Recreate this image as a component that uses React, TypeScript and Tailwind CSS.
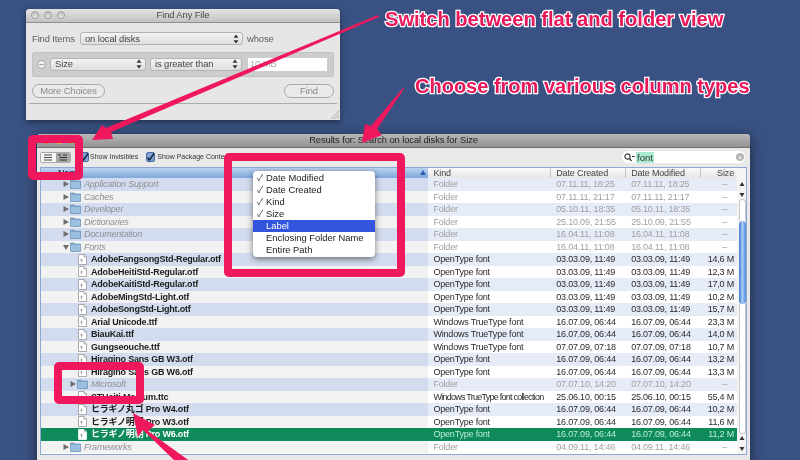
import React from "react";

type Row = { name: string; kind: string; created: string; modified: string; size: string; folder?: boolean; open?: boolean; indent?: boolean; selected?: boolean; tight?: boolean };

const f = (name: string, created: string, open = false, indent = false): Row => ({ name, kind: "Folder", created, modified: created, size: "–", folder: true, open, indent });
const o = (name: string, d: string, size: string, selected = false): Row => ({ name, kind: "OpenType font", created: d, modified: d, size, selected });
const w = (name: string, d: string, size: string): Row => ({ name, kind: "Windows TrueType font", created: d, modified: d, size });

const rows: Row[] = [
  f("Application Support", "07.11.11, 18:25"),
  f("Caches", "07.11.11, 21:17"),
  f("Developer", "05.10.11, 18:35"),
  f("Dictionaries", "25.10.09, 21:55"),
  f("Documentation", "16.04.11, 11:08"),
  f("Fonts", "16.04.11, 11:08", true),
  o("AdobeFangsongStd-Regular.otf", "03.03.09, 11:49", "14,6 M"),
  o("AdobeHeitiStd-Regular.otf", "03.03.09, 11:49", "12,3 M"),
  o("AdobeKaitiStd-Regular.otf", "03.03.09, 11:49", "17,0 M"),
  o("AdobeMingStd-Light.otf", "03.03.09, 11:49", "10,2 M"),
  o("AdobeSongStd-Light.otf", "03.03.09, 11:49", "15,7 M"),
  w("Arial Unicode.ttf", "16.07.09, 06:44", "23,3 M"),
  w("BiauKai.ttf", "16.07.09, 06:44", "14,0 M"),
  w("Gungseouche.ttf", "07.07.09, 07:18", "10,7 M"),
  o("Hiragino Sans GB W3.otf", "16.07.09, 06:44", "13,2 M"),
  o("Hiragino Sans GB W6.otf", "16.07.09, 06:44", "13,3 M"),
  f("Microsoft", "07.07.10, 14:20", false, true),
  { name: "STHeiti Medium.ttc", kind: "Windows TrueType font collection", created: "25.06.10, 00:15", modified: "25.06.10, 00:15", size: "55,4 M", tight: true },
  o("ヒラギノ丸ゴ Pro W4.otf", "16.07.09, 06:44", "10,2 M"),
  o("ヒラギノ明朝 Pro W3.otf", "16.07.09, 06:44", "11,6 M"),
  o("ヒラギノ明朝 Pro W6.otf", "16.07.09, 06:44", "11,2 M", true),
  f("Frameworks", "04.09.11, 14:46"),
];

const menu = ["Date Modified", "Date Created", "Kind", "Size", "Label", "Enclosing Folder Name", "Entire Path"];

function Folder() {
  return (
    <svg width="11" height="10" viewBox="0 0 11 10" className="shrink-0">
      <path d="M0.5 2 L0.5 1 L4 1 L5 2 L10.5 2 L10.5 9.5 L0.5 9.5 Z" fill="#7fa8cf" stroke="#5f88ad" strokeWidth="0.6" />
      <rect x="1" y="3" width="9" height="6" fill="#9cc0e0" />
    </svg>
  );
}

function FileIcon({ light }: { light?: boolean }) {
  return (
    <svg width="9" height="11" viewBox="0 0 9 11" className="shrink-0">
      <path d="M0.5 0.5 H6 L8.5 3 V10.5 H0.5 Z" fill="#fff" stroke={light ? "#fff" : "#8a8a8a"} strokeWidth="0.7" />
      <path d="M6 0.5 V3 H8.5" fill="#ddd" stroke={light ? "#aaa" : "#8a8a8a"} strokeWidth="0.6" />
      <path d="M2 6 H5 M3.5 4.5 V8.5" stroke="#999" strokeWidth="0.7" />
    </svg>
  );
}

function Tri({ open }: { open?: boolean }) {
  return (
    <svg width="6" height="6" viewBox="0 0 6 6" className="shrink-0">
      <path d={open ? "M0 1 H6 L3 6 Z" : "M0.5 0 L6 3 L0.5 6 Z"} fill="#6e6e6e" />
    </svg>
  );
}

function Updown() {
  return (
    <svg width="6" height="10" viewBox="0 0 6 10" className="shrink-0">
      <path d="M3 0.5 L5.5 3.8 H0.5 Z M3 9.5 L5.5 6.2 H0.5 Z" fill="#333" />
    </svg>
  );
}

function Select({ label, className }: { label: string; className: string }) {
  return (
    <div className={`flex h-[13px] shrink-0 items-center justify-between rounded-[3px] border border-[#b4b4b4] bg-gradient-to-b from-[#f4f4f4] to-[#dedede] pl-[4px] pr-[3px] text-[#444] ${className}`}>
      <span className="whitespace-nowrap">{label}</span>
      <Updown />
    </div>
  );
}

function Check({ className }: { className: string }) {
  return (
    <span className={`flex h-[10px] w-[9px] shrink-0 items-center justify-center rounded-[2px] border border-[#4c6e9f] bg-[#7fa3d4] ${className}`}>
      <svg width="9" height="9" viewBox="0 0 9 9" className="shrink-0"><path d="M1.5 4.5 L3.5 7 L8 0.5" fill="none" stroke="#10243f" strokeWidth="1.4" /></svg>
    </span>
  );
}

function FindWindow() {
  return (
    <div className="absolute left-[26px] top-[9px] flex h-[111px] w-[314px] flex-col rounded-t-[4px] bg-[#e6e6e6] text-[9.4px] tracking-[-0.1px] shadow-[0_2px_6px_rgba(0,0,0,0.45)]">
      <div className="relative flex h-[13.5px] shrink-0 items-center justify-center rounded-t-[4px] border-b border-[#8f8f8f] bg-gradient-to-b from-[#e4e4e4] to-[#c2c2c2] text-[#4a4a4a]">
        <div className="absolute left-[5px] top-[2px] flex gap-[5px]">
          {[0, 1, 2].map((i) => (
            <span key={i} className="h-[8px] w-[8px] rounded-full border border-[#a0a0a0] bg-gradient-to-b from-[#bdbdbd] to-[#e8e8e8]" />
          ))}
        </div>
        Find Any File
      </div>
      <div className="flex items-center px-[6px] pt-[9px] text-[#5c5c5c]">
        <span className="w-[48px] shrink-0 whitespace-nowrap">Find Items</span>
        <Select label="on local disks" className="w-[163px]" />
        <span className="ml-[4px]">whose</span>
      </div>
      <div className="mx-[6px] mt-[6px] flex h-[25px] items-center rounded-[2px] border border-[#c2c2c2] bg-[#cdcdcd] pl-[4px]">
        <span className="flex h-[9px] w-[9px] shrink-0 items-center justify-center rounded-full border border-[#a5a5a5] bg-[#f0f0f0] leading-none text-[#777]">–</span>
        <Select label="Size" className="ml-[4px] w-[96px]" />
        <Select label="is greater than" className="ml-[4px] w-[92px]" />
        <div className="ml-[6px] flex h-[13px] w-[79px] shrink-0 items-center bg-white pl-[2px] text-[#aaa]">10 MB</div>
      </div>
      <div className="flex justify-between px-[6px] pt-[7px] text-[#888]">
        <span className="flex h-[14px] w-[73px] items-center justify-center rounded-full border border-[#a8a8a8] bg-[#eaeaea]">More Choices</span>
        <span className="flex h-[14px] w-[50px] items-center justify-center rounded-full border border-[#a8a8a8] bg-[#eaeaea]">Find</span>
      </div>
      <div className="mx-[3px] mt-[5px] border-t border-[#ababab]" />
      <svg width="9" height="9" viewBox="0 0 9 9" className="absolute bottom-[1px] right-[1px]">
        <path d="M1 9 L9 1 M4 9 L9 4 M7 9 L9 7" stroke="#9a9a9a" strokeWidth="0.8" />
      </svg>
    </div>
  );
}

function Header() {
  return (
    <div className="flex h-[10px] shrink-0 items-center whitespace-nowrap bg-gradient-to-b from-[#fafafa] to-[#e6e6e6] text-[9px] leading-[10px] tracking-[-0.15px] text-[#444]">
      <div className="relative flex h-full w-[388px] items-center bg-gradient-to-b from-[#bcd3f0] to-[#7ea7dc] pl-[17px] text-[#111]">
        Name
        <svg width="6" height="5" viewBox="0 0 6 5" className="absolute right-[2px] top-[2px]"><path d="M3 0 L6 5 H0 Z" fill="#2d62b0" /></svg>
      </div>
      <div className="flex h-full w-[122px] items-center pl-[5px]">Kind</div>
      <div className="flex h-full w-[75px] items-center border-l border-[#c6c6c6] pl-[5px]">Date Created</div>
      <div className="flex h-full w-[75px] items-center border-l border-[#c6c6c6] pl-[5px]">Date Modified</div>
      <div className="flex h-full w-[37px] items-center justify-end border-l border-[#c6c6c6] pr-[3px]">Size</div>
    </div>
  );
}

function TableRow({ r, i }: { r: Row; i: number }) {
  const odd = i % 2 === 0;
  const nameBg = r.selected ? "bg-[#0f8a5b]" : odd ? "bg-[#d2dcee]" : "bg-[#f2f2f2]";
  const rowBg = r.selected ? "bg-[#0f8a5b]" : odd ? "bg-[#e5ecf8]" : "bg-white";
  const color = r.selected ? "text-[#b6ecd2]" : r.folder ? "text-[#a0a0a0]" : "text-[#2a2a2a]";
  const pad = r.folder ? (r.indent ? "pl-[29px]" : "pl-[22px]") : "pl-[37px]";
  return (
    <div className={`flex h-[12.5px] items-center whitespace-nowrap text-[9px] leading-[12px] tracking-[-0.2px] ${rowBg} ${color}`}>
      <div className={`flex h-full w-[388px] items-center ${pad} ${nameBg}`}>
        {r.folder ? (
          <>
            <Tri open={r.open} />
            <span className="pl-[1px]"><Folder /></span>
            <span className="ml-[3px] italic text-[#8f8f96]">{r.name}</span>
          </>
        ) : (
          <>
            <FileIcon light={r.selected} />
            <span className={`ml-[4px] font-bold ${r.selected ? "text-white" : "text-[#1c1c1c]"}`}>{r.name}</span>
          </>
        )}
      </div>
      <div className={`w-[122px] pl-[5px] ${r.tight ? "tracking-[-0.75px]" : ""}`}>{r.kind}</div>
      <div className="w-[75px] pl-[6px]">{r.created}</div>
      <div className="w-[75px] pl-[6px]">{r.modified}</div>
      <div className={`w-[37px] text-right ${r.folder ? "pr-[10px]" : "pr-[3px]"}`}>{r.size}</div>
    </div>
  );
}

function Scrollbar() {
  return (
    <div className="flex w-[10px] shrink-0 flex-col items-center bg-[#f4f4f4]">
      <svg width="6" height="19" viewBox="0 0 6 19" className="mt-[12px] shrink-0">
        <path d="M3 2 L5.5 6 H0.5 Z M3 17 L5.5 13 H0.5 Z" fill="#333" />
      </svg>
      <div className="h-[22px] w-[7px] shrink-0 rounded-t-full border-x border-t border-[#c8c8c8] bg-white" />
      <div className="h-[83px] w-[7px] shrink-0 rounded-full bg-gradient-to-r from-[#3f79cf] via-[#a9cdf5] to-[#4e88d8]" />
      <div className="h-[130px] w-[7px] shrink-0 rounded-b-full border-x border-b border-[#c8c8c8] bg-white" />
      <svg width="6" height="19" viewBox="0 0 6 19" className="shrink-0">
        <path d="M3 2 L5.5 6 H0.5 Z M3 17 L5.5 13 H0.5 Z" fill="#333" />
      </svg>
    </div>
  );
}

function ResultsWindow() {
  return (
    <div className="absolute left-[37px] top-[134px] flex h-[340px] w-[713px] flex-col rounded-t-[4px] bg-[#e9e9e9] shadow-[0_3px_14px_rgba(0,0,0,0.55)]">
      <div className="relative flex h-[13.5px] shrink-0 items-center justify-center rounded-t-[4px] border-b border-[#6f6f6f] bg-gradient-to-b from-[#b9b9b9] to-[#929292] text-[9.4px] tracking-[-0.1px] text-[#222]">
        <div className="absolute left-[5px] top-[2px] flex gap-[5px]">
          <span className="h-[8px] w-[8px] rounded-full bg-[#e0705a]" />
          <span className="h-[8px] w-[8px] rounded-full bg-[#e3b04f]" />
          <span className="h-[8px] w-[8px] rounded-full bg-[#8cb45a]" />
        </div>
        Results for: Search on local disks for Size
      </div>
      <div className="flex h-[19.5px] shrink-0 items-center whitespace-nowrap pl-[3px] pr-[5px] text-[7px] text-[#333]">
        <div className="flex h-[11px] w-[31px] shrink-0 overflow-hidden rounded-[2px] border border-[#aaa]">
          <span className="flex w-1/2 items-center justify-center bg-[#f6f6f6]">
            <svg width="8" height="7" viewBox="0 0 8 7"><path d="M0 1 H8 M0 3.5 H8 M0 6 H8" stroke="#444" strokeWidth="1" /></svg>
          </span>
          <span className="flex w-1/2 items-center justify-center bg-[#a9a9a9]">
            <svg width="10" height="7" viewBox="0 0 10 7"><path d="M0 1 H3 M1.5 3.5 H9 M1.5 6 H9 M5 1 H9" stroke="#333" strokeWidth="1" /></svg>
          </span>
        </div>
        <Check className="ml-[9px]" />
        <span className="ml-[1px]">Show Invisibles</span>
        <Check className="ml-[8px]" />
        <span className="ml-[2px]">Show Package Contents</span>
        <div className="ml-auto flex h-[12px] w-[123px] shrink-0 items-center rounded-full bg-white pl-[2px] pr-[1px] text-[9.5px] text-[#333]">
          <svg width="11" height="9" viewBox="0 0 11 9" className="shrink-0"><circle cx="3.5" cy="3.5" r="2.6" fill="none" stroke="#444" strokeWidth="1.2" /><path d="M5.5 5.5 L7.5 8" stroke="#444" strokeWidth="1.4" /><path d="M8 3.5 H11" stroke="#444" /></svg>
          <span className="ml-[1px] bg-[#a8ecd0] px-[1px] leading-[11px]">font</span>
          <span className="ml-auto flex h-[8px] w-[8px] items-center justify-center rounded-full bg-[#b4b4b4] text-[7px] leading-none text-white">×</span>
        </div>
      </div>
      <div className="mx-[3px] flex h-[288px] shrink-0 flex-col border border-[#8ba8d4] bg-white">
        <div className="flex h-[286px] overflow-hidden">
          <div className="w-[696px] shrink-0">
            <Header />
            {rows.map((r, i) => (
              <TableRow key={r.name} r={r} i={i} />
            ))}
          </div>
          <Scrollbar />
        </div>
      </div>
    </div>
  );
}

function ColumnMenu() {
  return (
    <div className="absolute left-[253px] top-[171px] w-[122px] rounded-[4px] bg-white py-[1px] text-[9.4px] leading-[12px] text-[#222] shadow-[0_2px_6px_rgba(0,0,0,0.5)]">
      {menu.map((m, i) => (
        <div key={m} className={`relative flex h-[12px] items-center pl-[13px] ${m === "Label" ? "bg-[#3355dd] text-white" : ""}`}>
          {i < 4 && <span className="absolute left-[4px] text-[9px] text-[#444]">✓</span>}
          {m}
        </div>
      ))}
    </div>
  );
}

function Annotations() {
  return (
    <>
      <svg width="800" height="460" viewBox="0 0 800 460" className="absolute left-0 top-0">
        <g fill="#f0185c">
          <path d="M378 15 L379 17 L111 132 L113 139 L92 140 L102 125 L106 128 Z" />
          <path d="M403 88 L404 89 L377 129 L382 135 L362 143 L365 124 L371 126 Z" />
          <path d="M133 413 L155 425 L148 431 L191 462 L176 462 L143 430 L138 437 Z" />
        </g>
      </svg>
      <div className="absolute left-[28px] top-[135px] h-[45px] w-[55px] rounded-[5px] border-[8px] border-[#f0185c]" />
      <div className="absolute left-[224px] top-[153px] h-[124px] w-[181px] rounded-[5px] border-[8px] border-[#f0185c]" />
      <div className="absolute left-[54px] top-[362px] h-[42px] w-[90px] rounded-[5px] border-[8px] border-[#f0185c]" />
      <div className="absolute left-[385px] top-[8px] whitespace-nowrap text-[20.1px] font-bold leading-[22px] text-[#e8185a] [-webkit-text-stroke:2.5px_#fff] [paint-order:stroke_fill]">
        Switch between flat and folder view
      </div>
      <div className="absolute left-[415px] top-[75px] whitespace-nowrap text-[20px] font-bold leading-[22px] text-[#e8185a] [-webkit-text-stroke:2.5px_#fff] [paint-order:stroke_fill]">
        Choose from various column types
      </div>
    </>
  );
}

export default function App() {
  return (
    <div className="relative h-[460px] w-[800px] overflow-hidden bg-[#3a5283] font-['Liberation_Sans','Noto_Sans_CJK_JP',sans-serif] blur-[0.4px]">
      <FindWindow />
      <ResultsWindow />
      <ColumnMenu />
      <Annotations />
    </div>
  );
}
